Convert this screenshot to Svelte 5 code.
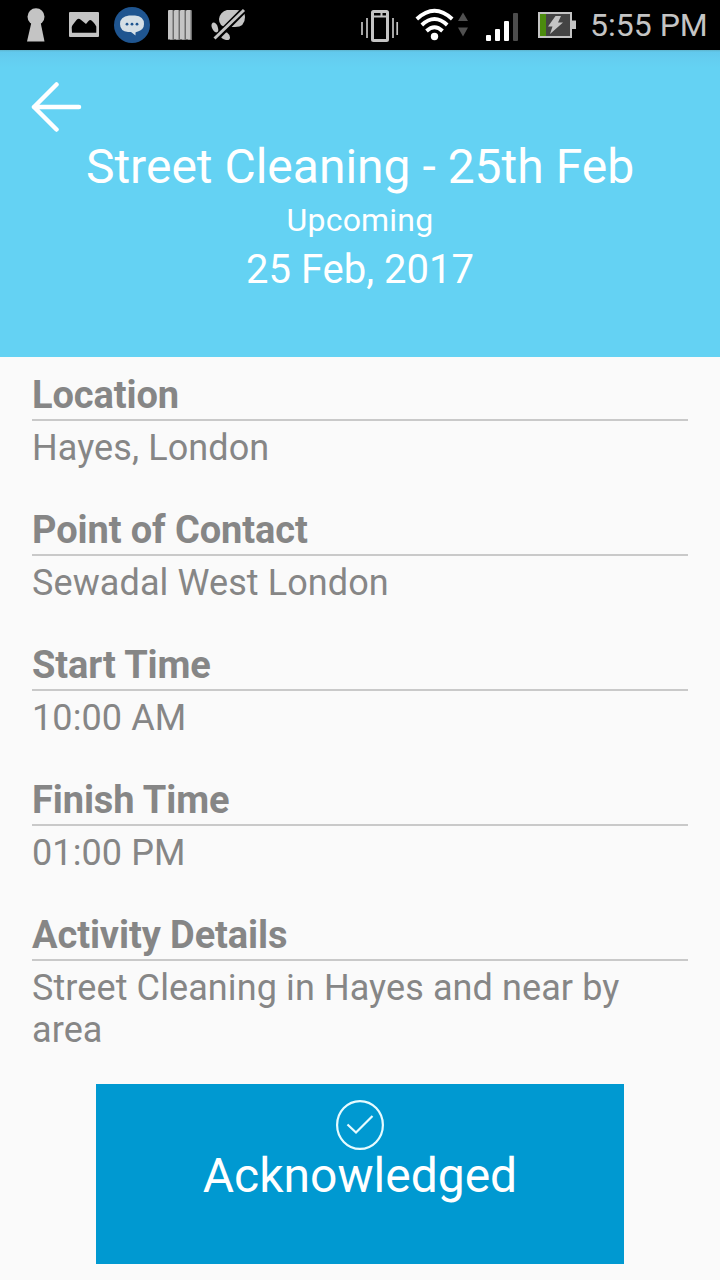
<script lang="ts">
	const activity = {
		title: 'Street Cleaning - 25th Feb',
		status: 'Upcoming',
		date: '25 Feb, 2017'
	};

	const details = [
		{ label: 'Location', value: 'Hayes, London' },
		{ label: 'Point of Contact', value: 'Sewadal West London' },
		{ label: 'Start Time', value: '10:00 AM' },
		{ label: 'Finish Time', value: '01:00 PM' },
		{ label: 'Activity Details', value: 'Street Cleaning in Hayes and near by area' }
	];
</script>

<div class="screen">
	<div class="status-bar">
		<svg class="status-bar__left" width="260" height="50" viewBox="0 0 260 50" aria-hidden="true">
			<!-- keyhole -->
			<g fill="#c4c4c4">
				<circle cx="36" cy="16.800" r="8.500" />
				<path d="M31.500 22h9l4 19.500H27z" />
			</g>
			<!-- gallery -->
			<path
				fill="#c4c4c4"
				fill-rule="evenodd"
				d="M70 12h28q1 0 1 1v23q0 1-1 1H70q-1 0-1-1V13q0-1 1-1zM72 32.700h24.300v-6.200q-1-2.200-3-4.200l-1.800-1.800q-1.500-1-3 .5l-2.500 3-5.500-4.500q-2-1.500-4 .5l-3.500 4.500q-1.300 1.500-1.300 3z"
			/>
			<!-- messages -->
			<circle cx="132" cy="25" r="18" fill="#1f5590" />
			<path
				fill="#d5dfe6"
				d="M129 15.500h6q9 .6 9 8.500 0 5.500-6 7.500-2 .5-2.500 1v3l-4.500-3.500h-3q-8-1-8-8 0-7.500 9-8.500z"
			/>
			<g fill="#1f5590">
				<circle cx="127" cy="24.200" r="1.400" />
				<circle cx="132" cy="24.200" r="1.400" />
				<circle cx="137" cy="24.200" r="1.400" />
			</g>
			<!-- bars -->
			{#each [168, 174, 180, 186] as x}
				<path fill="#6c6c6c" d="M{x + 1} 10h4q1 0 1 1v29h-4z" />
				<path fill="#c4c4c4" d="M{x + 1} 10h3.500v29.500H{x}V11q0-1 1-1z" />
			{/each}
			<!-- muted notifications -->
			<g fill="#c4c4c4">
				<path d="M227 10h10q8 0 8 7 0 10-10 10h-9q-7-1-7-8 1-7 8-9z" />
				<path d="M213 22.500q4 0 5 5.500 1 4-1 4.500-3 0-5-4.500-1.500-4 1-5.500z" />
				<path d="M221 31q8 0 9 6.500 0 3-4 2.500-5-1-6-5z" />
			</g>
			<path d="M213 41L246 8" stroke="#000" stroke-width="6.500" />
			<path d="M214.500 38.500L244 10" stroke="#c4c4c4" stroke-width="3" />
		</svg>

		<svg class="status-bar__right" width="240" height="50" viewBox="340 0 240 50" aria-hidden="true">
			<!-- vibrate -->
			<rect x="372.500" y="11.500" width="15" height="29" rx="1" fill="none" stroke="#c4c4c4" stroke-width="3" />
			<path d="M373 16.500h14M381.500 12v4" stroke="#c4c4c4" stroke-width="2" />
			<path
				d="M367 18v20M362 22v13M393 18v20M397.200 22v13"
				stroke="#c4c4c4"
				stroke-width="1.700"
			/>
			<!-- wifi -->
			<g fill="none" stroke="#fff" stroke-width="3.800">
				<path d="M416.800 19Q434.500 2.500 452.200 19" />
				<path d="M421.800 25Q434.500 13 447.200 25" />
				<path d="M426.500 31Q434.500 23.500 442.500 31" />
			</g>
			<circle cx="434.500" cy="36.500" r="3.700" fill="#fff" />
			<path d="M458 21l5-8.500 5 8.500zM458 27.500l5 9 5-9z" fill="#505050" />
			<!-- cell signal -->
			<g fill="#fff">
				<rect x="486" y="35" width="5" height="6" rx="1" />
				<rect x="495" y="29" width="5" height="12" rx="1" />
				<rect x="504" y="21" width="5" height="20" rx="1" />
			</g>
			<rect x="513" y="13" width="5" height="28" rx="1" fill="#4c4c4c" />
			<!-- charging battery -->
			<rect x="539" y="13" width="32" height="24" fill="#444" stroke="#c4c4c4" stroke-width="2" />
			<rect x="540" y="14" width="6" height="22" fill="#4b8b0d" />
			<rect x="572" y="20.500" width="4" height="8.500" fill="#c4c4c4" />
			<path d="M555.500 16h5.500l-3 6.500h5L550 34l2.500-7.500H548z" fill="#c4c4c4" />
		</svg>

		<span class="status-bar__time">5:55 PM</span>
	</div>

	<header class="header">
		<button class="back" aria-label="Back">
			<svg width="52" height="52" viewBox="0 0 52 52">
				<path
					d="M25.500 3.500L3 26L25.500 48.500M3 26H48"
					fill="none"
					stroke="#fff"
					stroke-width="4.500"
					stroke-linecap="round"
					stroke-linejoin="round"
				/>
			</svg>
		</button>
		<h1 class="header__title">{activity.title}</h1>
		<p class="header__status">{activity.status}</p>
		<p class="header__date">{activity.date}</p>
	</header>

	<main class="details">
		{#each details as { label, value }}
			<section class="detail">
				<h2 class="detail__label">{label}</h2>
				<p class="detail__value">{value}</p>
			</section>
		{/each}
	</main>

	<button class="acknowledge">
		<svg width="48" height="50" viewBox="0 0 48 50" aria-hidden="true">
			<g fill="none" stroke="#e6fbff" stroke-width="2.200">
				<ellipse cx="24" cy="25" rx="22.900" ry="23.900" />
				<path d="M11.500 24.500L20 32.500L36.500 16" />
			</g>
		</svg>
		<span class="acknowledge__text">Acknowledged</span>
	</button>
</div>

<style>
	:global(body) {
		background: #fafafa;
	}
	.screen {
		display: flex;
		flex-direction: column;
		width: 720px;
		height: 1280px;
		overflow: hidden;
		background: #fafafa;
		font-family: Roboto, sans-serif;
	}
	h1,
	h2,
	p {
		margin: 0;
		font-weight: 400;
	}
	svg {
		display: block;
	}
	button {
		border: none;
		padding: 0;
		font-family: inherit;
		cursor: pointer;
	}

	.status-bar {
		display: flex;
		align-items: center;
		height: 50px;
		background: #000;
	}
	.status-bar__right {
		margin-left: 80px;
	}
	.status-bar__time {
		margin-left: 10px;
		font-size: 32px;
		line-height: 50px;
		color: #c4c4c4;
		white-space: nowrap;
	}

	.header {
		display: flex;
		flex-direction: column;
		align-items: center;
		box-sizing: border-box;
		height: 307px;
		padding: 31px 31px 0;
		background: linear-gradient(#5fb4cc 0, #62c9ed 2px, #64cdf0 8px, #64d2f3 18px);
		color: #fff;
	}
	.back {
		align-self: flex-start;
		background: none;
	}
	.header__title {
		margin-top: 6px;
		font-size: 48px;
		line-height: 56px;
		white-space: nowrap;
	}
	.header__status {
		margin-top: 6px;
		font-size: 32px;
		line-height: 38px;
		letter-spacing: 0.2px;
	}
	.header__date {
		margin-top: 7px;
		font-size: 40px;
		line-height: 48px;
	}

	.details {
		padding: 16px 32px 0;
	}
	.detail {
		height: 135px;
		color: #868686;
	}
	.detail__label {
		box-sizing: border-box;
		height: 48px;
		border-bottom: 2px solid #c9c9c9;
		font-size: 38px;
		font-weight: 700;
		line-height: 44px;
		letter-spacing: -0.1px;
	}
	.detail__value {
		padding-top: 6px;
		font-size: 36px;
		line-height: 42px;
		letter-spacing: 0.1px;
	}

	.acknowledge {
		display: flex;
		flex-direction: column;
		align-items: center;
		width: 528px;
		height: 180px;
		margin: 36px auto 0;
		padding-top: 16px;
		background: #0099d1;
		color: #fff;
	}
	.acknowledge__text {
		font-size: 48px;
		line-height: 52px;
	}
</style>
